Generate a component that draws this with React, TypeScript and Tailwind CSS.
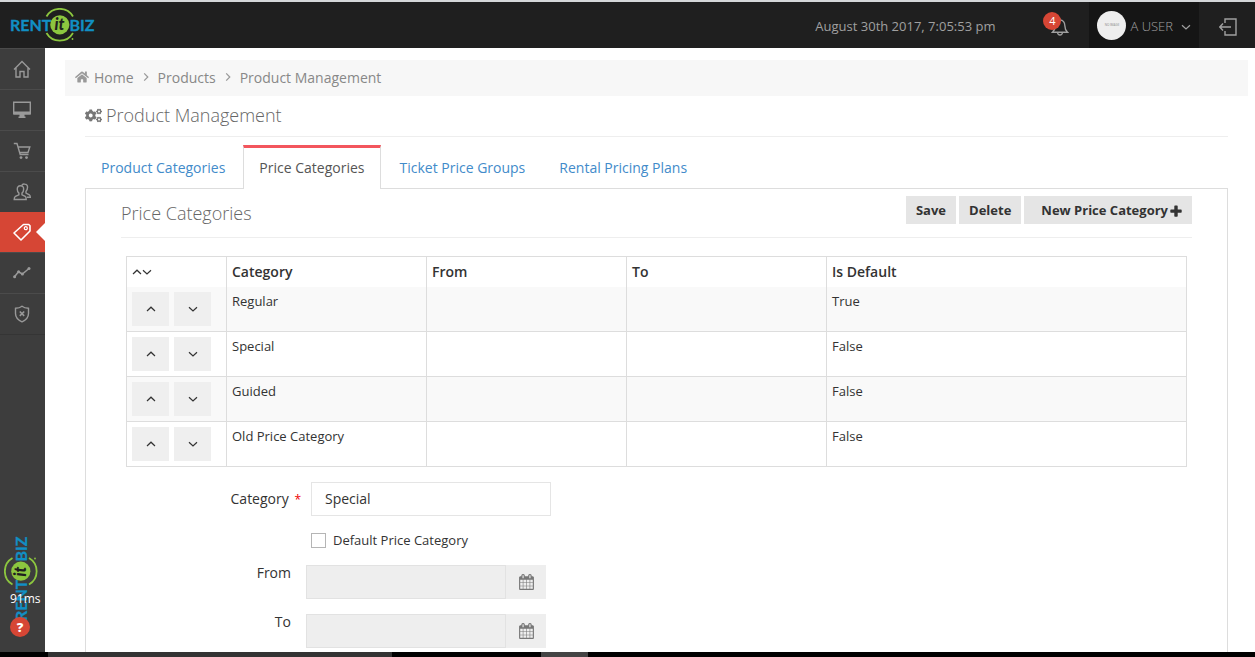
import type { ReactNode } from "react";
import { FaCogs, FaHome } from "react-icons/fa";

function Logo({ className }: { className?: string }) {
  return (
    <svg viewBox="0 0 86 34" width="86" height="34" className={className} role="img" aria-label="Rent it Biz">
      <g fill="#118fc4" stroke="#118fc4" strokeWidth="0.300" fontFamily="Lato, sans-serif" fontWeight="700" fontSize="16">
        <text x="0" y="22.500">RENT</text>
        <text x="59.500" y="22.500">BIZ</text>
      </g>
      <g fill="none" stroke="#8cc63f" strokeWidth="1.800">
        <path d="M36.500 8.500A15.300 15.300 0 0 1 63 8.500" />
        <path d="M36.500 25A15.300 15.300 0 0 0 63 25" />
      </g>
      <circle cx="49.800" cy="16.800" r="9.600" fill="#8cc63f" />
      <circle cx="62.500" cy="31" r="0.900" fill="#8cc63f" />
      <text x="49.500" y="22" textAnchor="middle" fill="#1f1f1f" fontFamily="Lato, sans-serif" fontWeight="900" fontStyle="italic" fontSize="16">it</text>
    </svg>
  );
}

function Icon({ children, size = 18 }: { children: ReactNode; size?: number }) {
  return (
    <svg viewBox="0 0 18 18" width={size} height={size} fill="none" stroke="currentColor" strokeWidth="1.400" aria-hidden="true">
      {children}
    </svg>
  );
}

function Chevron({ direction, size = 10 }: { direction: "up" | "down" | "right"; size?: number }) {
  const path = { up: "M1 7L5 3.200L9 7", down: "M1 3.200L5 7L9 3.200", right: "M3.200 1.300L6.800 5L3.200 8.700" }[direction];
  return (
    <svg viewBox="0 0 10 10" width={size} height={size} fill="none" stroke="currentColor" strokeWidth="1.200" aria-hidden="true">
      <path d={path} />
    </svg>
  );
}

function PlusIcon() {
  return (
    <svg viewBox="0 0 12 12" width="12" height="12" fill="currentColor" aria-hidden="true">
      <path d="M5 .5h2q.7 0 .7.700v3.300h3.300q.7 0 .7.700v1.800q0 .7-.7.700H7.700v3.300q0 .7-.7.700H5q-.7 0-.7-.7V7.700H1q-.7 0-.7-.7V5.200q0-.7.700-.7h3.300V1.200q0-.7.700-.7z" />
    </svg>
  );
}

function CalendarIcon() {
  return (
    <svg viewBox="0 0 1664 1792" width="15" height="16" fill="currentColor" aria-hidden="true">
      <path d="M128 1664h288v-288h-288v288zm352 0h320v-288h-320v288zm-352-352h288v-320h-288v320zm352 0h320v-320h-320v320zm-352-384h288v-288h-288v288zm736 736h320v-288h-320v288zm-384-736h320v-288h-320v288zm768 736h288v-288h-288v288zm-384-352h320v-320h-320v320zm-352-864v-288q0-13-9.500-22.500t-22.500-9.500h-64q-13 0-22.500 9.500t-9.500 22.500v288q0 13 9.500 22.500t22.500 9.500h64q13 0 22.500-9.500t9.500-22.500zm736 864h288v-320h-288v320zm-384-384h320v-288h-320v288zm384 0h288v-288h-288v288zm32-480v-288q0-13-9.500-22.500t-22.500-9.500h-64q-13 0-22.500 9.500t-9.500 22.500v288q0 13 9.500 22.500t22.500 9.500h64q13 0 22.500-9.500t9.500-22.500zm384-64v1280q0 52-38 90t-90 38h-1408q-52 0-90-38t-38-90v-1280q0-52 38-90t90-38h128v-96q0-66 47-113t113-47h64q66 0 113 47t47 113v96h384v-96q0-66 47-113t113-47h64q66 0 113 47t47 113v96h128q52 0 90 38t38 90z" />
    </svg>
  );
}

const navItems: { label: string; active?: boolean; icon: ReactNode }[] = [
  { label: "Home", icon: <path d="M1 9.500L9 1.500L17 9.500M3 8v9h4v-5.500h4V17h4V8" /> },
  {
    label: "Displays",
    icon: (
      <>
        <path d="M.7 1.200h16.600v11.600H.7z" />
        <path d="M.7 10.500h16.600v3H.7zM6.500 13.500h5v2.500h-5zM5.500 15.500h7v1.500h-7z" fill="currentColor" stroke="none" />
      </>
    ),
  },
  {
    label: "Sales",
    icon: (
      <>
        <path d="M.8 1.500h3.200L7.200 12.500h8.300M4.800 5h12L15 10.500H6.500" />
        <circle cx="8" cy="15.600" r="1.400" fill="currentColor" stroke="none" />
        <circle cx="13.500" cy="15.600" r="1.400" fill="currentColor" stroke="none" />
      </>
    ),
  },
  {
    label: "Customers",
    icon: (
      <>
        <path d="M7.500 2.800c-2.500 0-3.400 1.600-3.200 3.600 0 1.800.8 3 1.600 3.700v1.700L2.500 13.300C1.500 14 1.200 15 1.200 16.500h12c0-1.500-.2-2.500-1-3.200l-3.200-1.500v-1.700c.8-.7 1.600-1.900 1.600-3.700.2-2-.6-3.600-3.100-3.600z" />
        <path d="M8.700 2.500C9.200 1.400 10.200.8 11.500 1c2.300.1 3.200 1.600 3 3.600 0 1.700-.7 3-1.500 3.700v1.800l3.300 1.700c.8.600 1 1.300 1 2.500h-3.500" />
      </>
    ),
  },
  {
    label: "Products",
    active: true,
    icon: (
      <>
        <path d="M10.500 1.500h5.200l1.300 1.300V8L8 17L1 10z" strokeWidth="1.600" strokeLinejoin="round" />
        <circle cx="12.800" cy="5.200" r="1.500" strokeWidth="1.300" />
      </>
    ),
  },
  {
    label: "Reports",
    icon: (
      <>
        <path d="M1.500 12.800L5.500 7.800L9.300 10L16 4.500" strokeWidth="1.500" />
        <g fill="currentColor" stroke="none">
          <circle cx="1.600" cy="12.800" r="1.500" />
          <circle cx="5.600" cy="7.800" r="1.500" />
          <circle cx="9.400" cy="10" r="1.500" />
          <circle cx="16" cy="4.600" r="1.500" />
        </g>
      </>
    ),
  },
  {
    label: "Security",
    icon: (
      <>
        <path d="M9 1.200C7 2.800 5 3.200 2.500 3.300v5.200c0 3.800 2.500 6.500 6.500 8.300 4-1.800 6.500-4.500 6.500-8.300V3.300C13 3.200 11 2.800 9 1.200z" />
        <path d="M6.800 6.500l4.400 4.400M11.200 6.500l-4.400 4.400" strokeWidth="1.600" />
      </>
    ),
  },
];

const rows = [
  { category: "Regular", isDefault: "True" },
  { category: "Special", isDefault: "False" },
  { category: "Guided", isDefault: "False" },
  { category: "Old Price Category", isDefault: "False" },
];

const tabs = ["Product Categories", "Price Categories", "Ticket Price Groups", "Rental Pricing Plans"];

function Header() {
  return (
    <header className="flex h-12 shrink-0 items-stretch border-t-2 border-[#d4d7d9] bg-[#1f1f1f] text-[#a0a0a0]">
      <a href="#home" className="flex items-center pl-[10px]">
        <Logo />
      </a>
      <div className="ml-auto flex items-center pt-1 text-[13px]">August 30th 2017, 7:05:53 pm</div>
      <button type="button" aria-label="Notifications, 4 new" className="relative ml-14 mr-5 flex w-[18px] items-center pt-1">
        <Icon>
          <path d="M9 .5v1.300M1.500 14.300h15c-1.800-1.600-2.600-3.300-2.600-6.300 0-3.600-1.900-6-4.900-6s-4.900 2.400-4.900 6c0 3-.8 4.700-2.600 6.300zM6.500 14.500c.2 1.600 1.200 2.500 2.500 2.500s2.300-.9 2.500-2.500" />
        </Icon>
        <span className="absolute -left-2 top-[10px] flex h-[18px] w-[18px] items-center justify-center rounded-full bg-[#d64635] text-[11px] text-white">4</span>
      </button>
      <button type="button" className="flex items-center gap-1 bg-[#151515] px-2 text-[13px] font-light">
        <span className="flex h-[29px] w-[29px] items-center justify-center rounded-full bg-[#eeeeee] text-[3px] font-normal text-[#888888]">NO IMAGE</span>
        <span className="pt-1">A USER</span>
        <span className="ml-1 pt-1">
          <Chevron direction="down" />
        </span>
      </button>
      <button type="button" aria-label="Log out" className="flex items-center pl-5 pr-[18px] pt-1">
        <Icon>
          <path d="M6 5V1h11v16H6v-4M12 9H1M4 5.500L.8 9L4 12.500" />
        </Icon>
      </button>
    </header>
  );
}

function Sidebar() {
  return (
    <aside className="flex w-[45px] shrink-0 flex-col bg-[#3d3d3d] text-[#999999]">
      <nav className="border-b border-[#353535]">
        {navItems.map((item) => (
          <a
            key={item.label}
            href="#nav"
            aria-label={item.label}
            className={
              item.active
                ? "relative flex h-10 items-center justify-center bg-[#d64635] pr-[2px] text-white"
                : "flex h-[41px] items-center justify-center border-t border-[#4b4b4b] pr-[2px]"
            }
          >
            <Icon>{item.icon}</Icon>
            {item.active && (
              <svg viewBox="0 0 9 18" width="9" height="18" className="absolute right-0 top-[11px]" aria-hidden="true">
                <path d="M9 0L0 9L9 18z" fill="#ffffff" />
              </svg>
            )}
          </a>
        ))}
      </nav>
      <div className="relative mt-auto h-[117px] w-full">
        <div className="absolute left-1 top-0 flex h-[86px] w-[34px] items-center justify-center">
          <Logo className="shrink-0 -rotate-90" />
        </div>
        <span className="absolute left-[10px] top-[54px] text-[12px] leading-5 text-white">91ms</span>
        <button type="button" aria-label="Help" className="absolute left-[10px] top-[82px] flex h-5 w-5 items-center justify-center rounded-full bg-[#d64635] pt-0.5 text-[13px] font-extrabold text-white">
          ?
        </button>
      </div>
    </aside>
  );
}

function PriceTable() {
  const cell = "border-x border-b border-[#dddddd] px-[5px] pt-[5px] pb-1 align-top leading-[19px]";
  const head = "border-x border-t border-[#dddddd] px-[5px] text-left text-[14px] font-semibold leading-5";
  const move = "flex h-[34px] w-[37px] items-center justify-center bg-[#efefef]";
  return (
    <table className="w-full table-fixed border-collapse text-[13px] text-[#333333]">
      <colgroup>
        <col className="w-[100px]" />
        <col className="w-[200px]" />
        <col className="w-[200px]" />
        <col className="w-[200px]" />
        <col />
      </colgroup>
      <thead>
        <tr className="h-[30px]">
          <th className={head} aria-label="Order">
            <span className="flex">
              <Chevron direction="up" />
              <Chevron direction="down" />
            </span>
          </th>
          <th className={head}>Category</th>
          <th className={head}>From</th>
          <th className={head}>To</th>
          <th className={head}>Is Default</th>
        </tr>
      </thead>
      <tbody>
        {rows.map((row) => (
          <tr key={row.category} className="h-[45px] odd:bg-[#f9f9f9]">
            <td className={cell}>
              <div className="flex gap-[5px]">
                <button type="button" className={move} aria-label={`Move ${row.category} up`}>
                  <Chevron direction="up" />
                </button>
                <button type="button" className={move} aria-label={`Move ${row.category} down`}>
                  <Chevron direction="down" />
                </button>
              </div>
            </td>
            <td className={cell}>{row.category}</td>
            <td className={cell}></td>
            <td className={cell}></td>
            <td className={cell}>{row.isDefault}</td>
          </tr>
        ))}
      </tbody>
    </table>
  );
}

function DateField({ id, label }: { id: string; label: string }) {
  return (
    <div className="flex">
      <label htmlFor={id} className="-mt-[3px] w-[170px] pr-[5px] text-right text-[14px] leading-[22px]">
        {label}
      </label>
      <div className="ml-[10px] flex h-[34px]">
        <input id={id} type="text" disabled className="w-[200px] border border-[#e2e2e2] bg-[#eeeeee] px-3 text-[14px]" />
        <button type="button" aria-label={`Choose ${label} date`} className="flex w-10 items-center justify-center bg-[#eeeeee] text-[#777777]">
          <CalendarIcon />
        </button>
      </div>
    </div>
  );
}

function PriceForm() {
  return (
    <form className="mt-[15px] flex flex-col gap-[15px] text-[#333333]">
      <div className="flex">
        <label htmlFor="category" className="w-[180px] pr-[5px] pt-[6px] text-right text-[14px] leading-[22px]">
          Category <span className="ml-[2px] text-[12px] text-[#ee0000]">*</span>
        </label>
        <input id="category" type="text" defaultValue="Special" className="ml-[5px] h-[34px] w-[240px] border border-[#e5e5e5] px-[13px] pb-[2px] text-[14px]" />
      </div>
      <label className="ml-[185px] flex h-[19px] items-center gap-[7px] text-[13px]">
        <input type="checkbox" className="h-[15px] w-[15px] appearance-none border border-[#b5b5b5] bg-white" />
        Default Price Category
      </label>
      <DateField id="from" label="From" />
      <DateField id="to" label="To" />
    </form>
  );
}

export default function App() {
  const action = "flex h-7 items-center bg-[#e5e5e5] px-[10px] pt-0.5 text-[13px] font-bold text-[#333333]";
  return (
    <div className="flex h-screen flex-col overflow-hidden bg-white font-['Open_Sans',sans-serif] text-[13px] text-[#333333]">
      <Header />
      <div className="flex min-h-0 flex-1">
        <Sidebar />
        <main className="min-w-0 flex-1 overflow-hidden pl-5 pr-[7px] pt-3">
          <nav aria-label="Breadcrumb" className="flex h-9 items-center bg-[#f7f7f7] pb-0.5 pl-[10px] text-[14px] text-[#888888]">
            <FaHome className="mr-[5px] text-[#999999]" size={14} aria-hidden="true" />
            <a href="#home">Home</a>
            <span className="mx-[7px] text-[#999999]"><Chevron direction="right" /></span>
            <a href="#products">Products</a>
            <span className="mx-[7px] text-[#999999]"><Chevron direction="right" /></span>
            <a href="#management">Product Management</a>
          </nav>
          <section className="px-5">
            <h1 className="flex h-[41px] items-center gap-1 border-b border-[#eeeeee] pb-0.5 text-[18px] font-light text-[#666666]">
              <FaCogs size={17} className="text-[#777777]" aria-hidden="true" />
              Product Management
            </h1>
            <div role="tablist" className="mt-2 flex gap-[2px]">
              {tabs.map((tab) => (
                <button
                  key={tab}
                  type="button"
                  role="tab"
                  aria-selected={tab === "Price Categories"}
                  className={
                    tab === "Price Categories"
                      ? "relative z-10 -mb-px h-11 border-x border-t-[3px] border-x-[#dddddd] border-t-[#f3565d] bg-white pb-0.5 pl-[15px] pr-4 text-[14px] text-[#555555]"
                      : "h-[43px] px-4 pt-px text-[14px] text-[#428bca]"
                  }
                >
                  {tab}
                </button>
              ))}
            </div>
            <div className="border border-[#dddddd] px-[35px] pb-10">
              <div className="flex h-[49px] items-start gap-[3px] border-b border-[#eeeeee] pt-[7px]">
                <h2 className="mr-auto pt-[3px] text-[18px] font-light leading-7 text-[#666666]">Price Categories</h2>
                <button type="button" className={action}>Save</button>
                <button type="button" className={action}>Delete</button>
                <button type="button" className={`${action} gap-[2px] pl-[17px]`}>
                  New Price Category
                  <PlusIcon />
                </button>
              </div>
              <div className="px-[5px] pt-[18px]">
                <PriceTable />
                <PriceForm />
              </div>
            </div>
          </section>
        </main>
      </div>
      <footer className="flex h-[5px] shrink-0 bg-black">
        <div className="ml-12 w-[344px] bg-[#333333]" />
        <div className="ml-[149px] w-[47px] bg-[#444444]" />
      </footer>
    </div>
  );
}
